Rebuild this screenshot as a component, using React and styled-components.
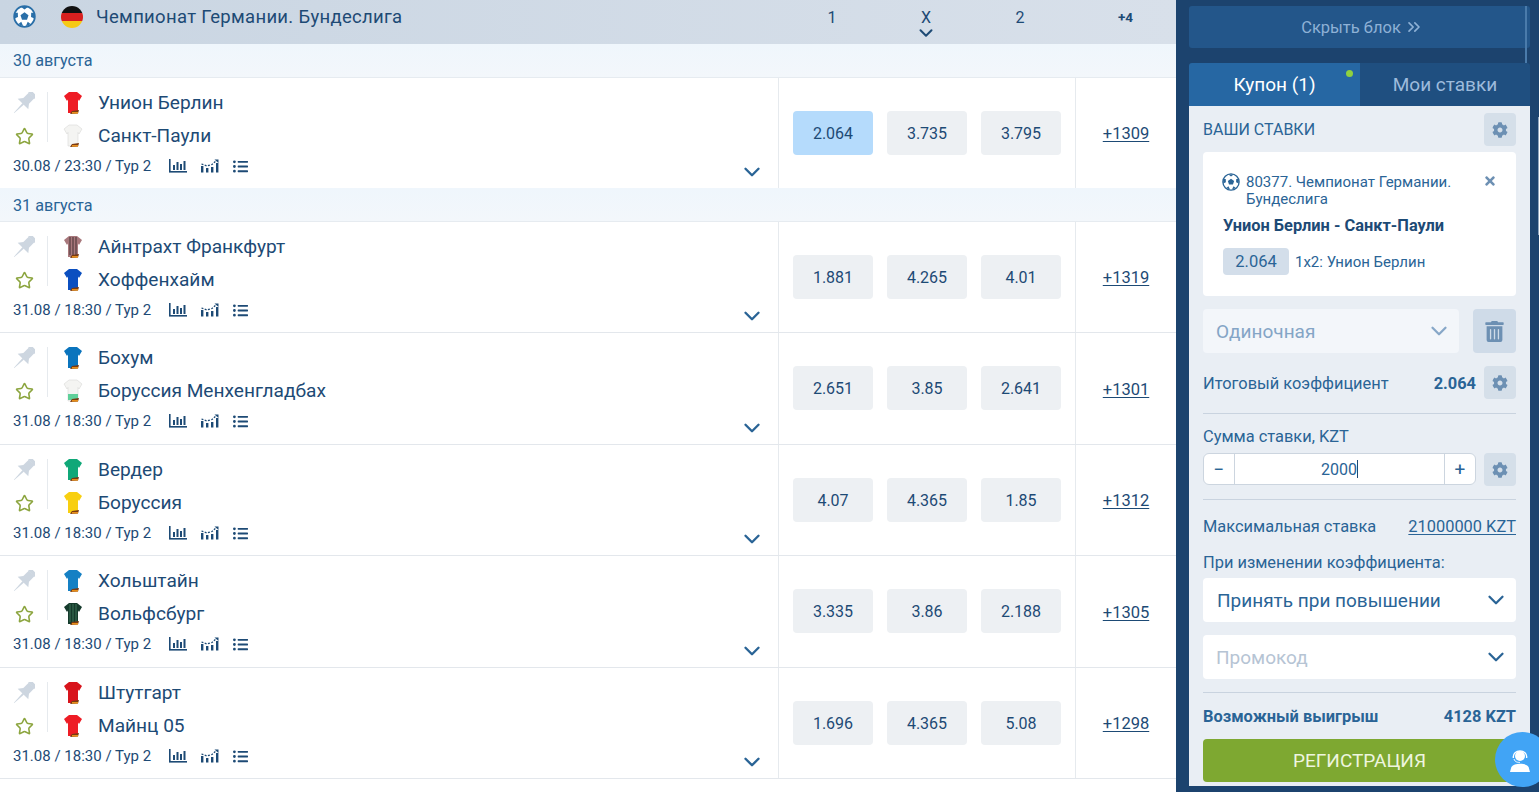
import React from 'react';
import styled, { createGlobalStyle } from 'styled-components';
import { FaCog, FaTrashAlt, FaListUl, FaTimes } from 'react-icons/fa';
import { FiChevronDown, FiChevronsRight } from 'react-icons/fi';
import { LuStar } from 'react-icons/lu';

const Global = createGlobalStyle`
  * { box-sizing: border-box; }
  html, body { margin: 0; padding: 0; height: 100%; overflow: hidden; background: #fff; }
  body { font-family: Roboto, "Liberation Sans", sans-serif; }
`;

const Page = styled.div`
  display: flex;
  width: 1539px;
  height: 792px;
  overflow: hidden;
`;

const Main = styled.div`
  width: 1176px;
  flex: none;
  background: #fff;
`;

const LeagueHeader = styled.div`
  display: flex;
  align-items: center;
  height: 44px;
  padding-bottom: 11px;
  background: linear-gradient(90deg, #c9d5e2, #d8e0ea);
  color: #1d4a75;
`;

const HeadLeft = styled.div`
  width: 778px;
  display: flex;
  align-items: center;
  padding-left: 13px;
  font-size: 18.5px;
  letter-spacing: 0.31px;
`;

const Flag = styled.span`
  width: 22px;
  height: 22px;
  margin: 0 13px 0 25px;
  border-radius: 50%;
  background: linear-gradient(#111 0 33%, #d8201f 33% 66%, #f6c915 66%);
`;

const HeadOdds = styled.div`
  width: 297px;
  display: flex;
  padding: 1px 0 0 14px;
  gap: 14px;
`;

const HeadOdd = styled.span`
  position: relative;
  width: 80px;
  text-align: center;
  font-size: 16px;
  svg { position: absolute; left: 29px; top: 14px; }
`;

const HeadMore = styled.span`
  width: 101px;
  text-align: center;
  font-size: 13.5px;
  font-weight: 700;
`;

const DateRow = styled.div`
  height: 34px;
  padding: ${p => p.$pt}px 0 0 13px;
  display: flex;
  align-items: center;
  background: linear-gradient(#eff6fc, #f3f7fb);
  border-bottom: 1px solid #e6ebf0;
  color: #2a6496;
  font-size: 16.2px;
`;

const Event = styled.div`
  display: flex;
  height: ${p => p.$h}px;
  border-bottom: ${p => (p.$line ? '1px solid #e3e7ec' : 'none')};
`;

const Info = styled.div`
  width: 779px;
  flex: none;
  display: flex;
  justify-content: space-between;
  padding: 8px 13px 0 13px;
  border-right: 1px solid #e6eaee;
`;

const InfoMain = styled.div`
  display: flex;
  flex-direction: column;
`;

const Teams = styled.div`
  display: flex;
`;

const Actions = styled.div`
  width: 35px;
  height: 50px;
  margin-top: 6px;
  padding-right: 12px;
  display: flex;
  flex-direction: column;
  justify-content: space-between;
  align-items: center;
  border-right: 1px solid #e6eaee;
`;

const StarIcon = styled(LuStar)`
  width: 19px;
  height: 19px;
  margin-bottom: -4px;
  color: #8ca53f;
`;

const TeamList = styled.div`
  margin-left: 15px;
  display: flex;
  flex-direction: column;
`;

const Team = styled.div`
  display: flex;
  align-items: center;
  height: 33px;
  color: #1d4a75;
  font-size: 19.1px;
  svg { margin-right: 15px; flex: none; }
`;

const Meta = styled.div`
  display: flex;
  align-items: center;
  margin-top: 5px;
  color: #1d4a75;
  font-size: 15px;
`;

const MetaIcons = styled.span`
  display: flex;
  align-items: center;
  gap: 14px;
  margin-left: 18px;
  color: #1d4a75;
`;

const RowChevron = styled(FiChevronDown)`
  align-self: flex-end;
  width: 26px;
  height: 26px;
  margin-bottom: 3px;
  color: #2a6496;
  stroke-width: 2.2;
`;

const Odds = styled.div`
  width: 297px;
  flex: none;
  display: flex;
  align-items: center;
  gap: 14px;
  padding-left: 14px;
  padding-bottom: 1px;
  border-right: 1px solid #e6eaee;
`;

const Odd = styled.div`
  width: 80px;
  height: 44px;
  padding-top: 1px;
  display: flex;
  align-items: center;
  justify-content: center;
  border-radius: 4px;
  background: ${p => (p.$active ? '#b5dbfc' : '#edf0f3')};
  color: #1d4a75;
  font-size: 16px;
`;

const More = styled.div`
  flex: 1;
  display: flex;
  align-items: center;
  justify-content: center;
  padding-top: 1px;
  color: #1d4a75;
  font-size: 16.5px;
  text-decoration: underline;
  text-underline-offset: 2px;
`;

const Side = styled.div`
  position: relative;
  width: 363px;
  flex: none;
  padding: 6px 9px 0 13px;
  background: #1c436e;
`;

const ScrollLine = styled.div`
  position: absolute;
  left: 349px;
  top: 6px;
  width: 2px;
  height: 100px;
  background: #4a7bab;
`;

const ScrollThumb = styled.div`
  position: absolute;
  right: 0;
  top: 117px;
  width: 1px;
  height: 118px;
  background: #8fa5bd;
`;

const HideBar = styled.div`
  height: 42px;
  padding-left: 6px;
  display: flex;
  align-items: center;
  justify-content: center;
  gap: 3px;
  border-radius: 3px;
  background: #23568a;
  color: #8eb1d6;
  font-size: 16.5px;
`;

const Tabs = styled.div`
  display: flex;
  margin-top: 15px;
  height: 43px;
`;

const Tab = styled.div`
  position: relative;
  width: ${p => p.$w}px;
  display: flex;
  align-items: center;
  justify-content: center;
  font-size: 19px;
  background: ${p => (p.$active ? '#2667a3' : '#1f4f80')};
  color: ${p => (p.$active ? '#fff' : '#9dbbdc')};
  border-radius: ${p => (p.$active ? '3px 0 0 0' : '0 3px 0 0')};
`;

const Dot = styled.span`
  position: absolute;
  top: 7px;
  right: 7px;
  width: 7px;
  height: 7px;
  border-radius: 50%;
  background: #8fd13f;
`;

const Panel = styled.div`
  height: 680px;
  padding: 7px 14px 0;
  background: #e9eef4;
  color: #2a6496;
`;

const Row = styled.div`
  display: flex;
  align-items: center;
  justify-content: space-between;
  height: ${p => p.$h}px;
  margin-top: ${p => p.$mt || 0}px;
  font-size: ${p => p.$fs || 16.4}px;
  font-weight: ${p => (p.$bold ? 700 : 400)};
`;

const RowLabel = styled.span`
  flex: 1;
  padding-top: 1px;
`;

const RowValue = styled.strong`
  padding-top: 1px;
`;

const GearBtn = styled.span`
  width: 32px;
  height: 33px;
  flex: none;
  margin-left: 8px;
  display: flex;
  align-items: center;
  justify-content: center;
  border-radius: 4px;
  background: #d5dfe9;
  color: #6d90b3;
  font-size: 16px;
`;

const Card = styled.div`
  height: 144px;
  margin-top: 6px;
  padding: 22px 19px 0 20px;
  border-radius: 4px;
  background: #fff;
`;

const CardHead = styled.div`
  display: flex;
  font-size: 15px;
  line-height: 17px;
  color: #2a6496;
  > svg:first-child { flex: none; margin: -1px 6px 0 -1px; }
`;

const Close = styled(FaTimes)`
  width: 14px;
  height: 14px;
  flex: none;
  margin: 0 0 0 20px;
  color: #6d90b3;
`;

const CardTitle = styled.div`
  margin-top: 8px;
  color: #1d4a75;
  font-size: 16.4px;
  font-weight: 700;
  line-height: 19px;
`;

const Pick = styled.div`
  display: flex;
  align-items: center;
  margin-top: 13px;
  color: #2a6496;
  font-size: 15px;
`;

const PickOdd = styled.span`
  width: 66px;
  height: 27px;
  margin-right: 6px;
  display: flex;
  align-items: center;
  justify-content: center;
  border-radius: 4px;
  background: #d3deea;
  font-size: 16.5px;
`;

const SelectRow = styled.div`
  display: flex;
  gap: 14px;
  margin-top: 13px;
`;

const Select = styled.div`
  flex: 1;
  height: 44px;
  margin-top: ${p => p.$mt || 0}px;
  padding: 0 7px 0 ${p => p.$pl || 13}px;
  display: flex;
  align-items: center;
  justify-content: space-between;
  border-radius: 4px;
  background: ${p => (p.$faded ? '#f3f6fa' : '#fff')};
  color: ${p => p.$color};
  font-size: 19px;
  svg { width: 26px; height: 26px; stroke-width: 2.1; color: ${p => (p.$faded ? '#87a7c8' : '#2a6496')}; }
`;

const TrashBtn = styled.span`
  width: 43px;
  height: 44px;
  display: flex;
  align-items: center;
  justify-content: center;
  border-radius: 4px;
  background: #cfdbe8;
  color: #6d90b3;
  font-size: 21px;
`;

const Divider = styled.div`
  height: 1px;
  margin-top: ${p => p.$mt}px;
  background: #c9d3df;
`;

const Label = styled.div`
  height: 20px;
  margin-top: ${p => p.$mt}px;
  display: flex;
  align-items: center;
  font-size: 16.4px;
`;

const StakeRow = styled.div`
  display: flex;
  margin-top: 7px;
`;

const Stake = styled.div`
  flex: 1;
  height: 32px;
  display: flex;
  border: 1px solid #ccd5df;
  border-radius: 6px;
  background: #fff;
  font-size: 16px;
`;

const StakeBtn = styled.span`
  width: ${p => p.$w}px;
  flex: none;
  display: flex;
  align-items: center;
  justify-content: center;
  font-size: 19px;
  border-${p => p.$side}: 1px solid #ccd5df;
`;

const StakeValue = styled.span`
  flex: 1;
  display: flex;
  align-items: center;
  justify-content: center;
`;

const Caret = styled.i`
  width: 1px;
  height: 18px;
  background: #1d4a75;
`;

const MaxLink = styled.span`
  text-decoration: underline;
  text-underline-offset: 2px;
`;

const Register = styled.div`
  height: 43px;
  margin-top: 13px;
  display: flex;
  align-items: center;
  justify-content: center;
  border-radius: 4px;
  background: #7ea831;
  color: #eef5df;
  font-size: 19px;
`;

const Bubble = styled.div`
  position: absolute;
  left: 319px;
  top: 732px;
  width: 55px;
  height: 55px;
  padding-left: 14px;
  display: flex;
  align-items: center;
  border-radius: 50%;
  background: #41a4f5;
`;

const shirtPath = 'M6 1 L14 1 L19 5 L16 10 L15 8.5 L15 22 L5 22 L5 8.5 L4 10 L1 5 Z';

// little team shirt: colour of the body, optional centre stripes and a lower band
function Shirt({ color, stripe, low }) {
  const white = color === WHITE;
  return (
    <svg width="20" height="24" viewBox="0 0 20 24">
      <path d={shirtPath} fill={color} stroke={white ? '#d8d8d6' : 'none'} strokeWidth="0.6" />
      {stripe && (
        <g fill={stripe} opacity="0.45">
          <rect x="6" y="2" width="2" height="18" />
          <rect x="9" y="2" width="2" height="18" />
          <rect x="12" y="2" width="2" height="18" />
        </g>
      )}
      {low && <path d="M5 15 L15 15 L15 21 L5 21 Z" fill={low} />}
      <path d="M9 20 L16 19 L15 22.5 L7 23 Z" fill="#7a3a12" />
      <rect x="9" y="21" width="6" height="1.6" fill="#e8901c" />
    </svg>
  );
}

function PinIcon() {
  return (
    <svg width="22" height="22" viewBox="0 0 22 22" fill="#cdd6e0">
      <g transform="rotate(45 11 11)">
        <rect x="5.5" y="-3" width="11" height="3.4" rx="1" />
        <rect x="7" y="0" width="8" height="9" />
        <path d="M7 8 L15 8 L18.5 12.4 L3.5 12.4 Z" />
        <path d="M10 12 L12 12 L11.3 25 L10.7 25 Z" />
      </g>
    </svg>
  );
}

function SoccerBall({ size, color }) {
  return (
    <svg width={size} height={size} viewBox="0 0 24 24">
      <circle cx="12" cy="12" r="10.8" fill="#fff" stroke={color} strokeWidth="1.8" />
      <g fill={color}>
        <path d="M12 7.6 L16.2 10.6 L14.6 15.4 L9.4 15.4 L7.8 10.6 Z" />
        <path d="M8.5 2 L15.5 2 L12 4.8 Z" />
        <path d="M22 8 L22.4 14 L18.8 12.4 L19 8 Z" />
        <path d="M2 8 L1.6 14 L5.2 12.4 L5 8 Z" />
        <path d="M6 19.5 L8.6 17.6 L10.6 21.8 L7.6 21 Z" />
        <path d="M18 19.5 L15.4 17.6 L13.4 21.8 L16.4 21 Z" />
      </g>
    </svg>
  );
}

function BarsIcon() {
  return (
    <svg width="18" height="14" viewBox="0 0 18 14" fill="#1d4a75">
      <rect x="0" y="0" width="1.6" height="13" />
      <rect x="0" y="12" width="18" height="1.6" />
      <rect x="4" y="6" width="2" height="5" />
      <rect x="7.5" y="3" width="2" height="8" />
      <rect x="11" y="5" width="2" height="6" />
      <rect x="14.5" y="2" width="2" height="9" />
    </svg>
  );
}

function TrendIcon() {
  return (
    <svg width="18" height="14" viewBox="0 0 18 14" fill="#1d4a75">
      <rect x="0" y="7" width="2.4" height="6.5" />
      <rect x="5" y="9" width="2.4" height="4.5" />
      <rect x="10" y="8" width="2.4" height="5.5" />
      <rect x="15" y="4" width="2.4" height="9.5" />
      <path d="M0.5 5 L6 7 L11 5.5 L15.5 1.5" fill="none" stroke="#1d4a75" strokeWidth="1.3" strokeDasharray="2 1.4" />
      <path d="M13.5 0.5 L17.5 0.5 L17.5 4 Z" />
    </svg>
  );
}

function AgentIcon() {
  return (
    <svg width="22" height="24" viewBox="0 0 22 24" fill="#fff">
      <circle cx="11" cy="8" r="5" />
      <path d="M4.4 10 C3 0.5 19 0.5 17.6 10" fill="none" stroke="#fff" strokeWidth="1.4" />
      <path d="M5 11 C6 14.4 9 14.4 11 14.4" fill="none" stroke="#fff" strokeWidth="1" />
      <path d="M1 24 L2.4 19 C4 16.5 7 15.8 11 15.8 C15 15.8 18 16.5 19.6 19 L21 24 Z" />
    </svg>
  );
}

const WHITE = '#f4f4f2';

const sections = [
  {
    date: '30 августа',
    pt: 0,
    rows: [
      { h: 110, a: 'Унион Берлин', b: 'Санкт-Паули', sa: { color: '#ee1c25' }, sb: { color: WHITE }, time: '30.08 / 23:30 / Тур 2', odds: ['2.064', '3.735', '3.795'], more: '+1309', active: true },
    ],
  },
  {
    date: '31 августа',
    pt: 1,
    rows: [
      { h: 111, a: 'Айнтрахт Франкфурт', b: 'Хоффенхайм', sa: { color: '#a8787c', stripe: '#3a2a2c' }, sb: { color: '#0b4fc0' }, odds: ['1.881', '4.265', '4.01'], more: '+1319', line: true },
      { h: 112, a: 'Бохум', b: 'Боруссия Менхенгладбах', sa: { color: '#0a74bd' }, sb: { color: WHITE, low: '#5fd09a' }, odds: ['2.651', '3.85', '2.641'], more: '+1301', line: true },
      { h: 111, a: 'Вердер', b: 'Боруссия', sa: { color: '#10a878' }, sb: { color: '#f8cf10' }, odds: ['4.07', '4.365', '1.85'], more: '+1312', line: true },
      { h: 112, a: 'Хольштайн', b: 'Вольфсбург', sa: { color: '#1580c4' }, sb: { color: '#153a2c', stripe: '#3f7a5c' }, odds: ['3.335', '3.86', '2.188'], more: '+1305', line: true },
      { h: 111, a: 'Штутгарт', b: 'Майнц 05', sa: { color: '#d8141c' }, sb: { color: '#ee1c25' }, odds: ['1.696', '4.365', '5.08'], more: '+1298', line: true },
    ],
  },
];

function App() {
  return (
    <Page>
      <Global />
      <Main>
        <LeagueHeader>
          <HeadLeft>
            <SoccerBall size={23} color="#2a6fa8" />
            <Flag />
            Чемпионат Германии. Бундеслига
          </HeadLeft>
          <HeadOdds>
            <HeadOdd>1</HeadOdd>
            <HeadOdd>
              X
              <FiChevronDown size={22} strokeWidth={2.2} />
            </HeadOdd>
            <HeadOdd>2</HeadOdd>
          </HeadOdds>
          <HeadMore>+4</HeadMore>
        </LeagueHeader>
        {sections.map(s => (
          <React.Fragment key={s.date}>
            <DateRow $pt={s.pt}>{s.date}</DateRow>
            {s.rows.map(r => (
              <Event key={r.a} $h={r.h} $line={r.line}>
                <Info>
                  <InfoMain>
                    <Teams>
                      <Actions>
                        <PinIcon />
                        <StarIcon />
                      </Actions>
                      <TeamList>
                        <Team><Shirt {...r.sa} />{r.a}</Team>
                        <Team><Shirt {...r.sb} />{r.b}</Team>
                      </TeamList>
                    </Teams>
                    <Meta>
                      {r.time || '31.08 / 18:30 / Тур 2'}
                      <MetaIcons>
                        <BarsIcon />
                        <TrendIcon />
                        <FaListUl size={15} />
                      </MetaIcons>
                    </Meta>
                  </InfoMain>
                  <RowChevron />
                </Info>
                <Odds>
                  {r.odds.map((o, i) => (
                    <Odd key={i} $active={r.active && i === 0}>{o}</Odd>
                  ))}
                </Odds>
                <More>{r.more}</More>
              </Event>
            ))}
          </React.Fragment>
        ))}
      </Main>
      <Side>
        <ScrollLine />
        <ScrollThumb />
        <HideBar>Скрыть блок <FiChevronsRight size={20} /></HideBar>
        <Tabs>
          <Tab $active $w={171}>Купон (1)<Dot /></Tab>
          <Tab $w={170}>Мои ставки</Tab>
        </Tabs>
        <Panel>
          <Row $h={33} $fs={16}>
            ВАШИ СТАВКИ
            <GearBtn><FaCog /></GearBtn>
          </Row>
          <Card>
            <CardHead>
              <SoccerBall size={18} color="#2a6496" />
              <span>80377. Чемпионат Германии. Бундеслига</span>
              <Close />
            </CardHead>
            <CardTitle>Унион Берлин - Санкт-Паули</CardTitle>
            <Pick>
              <PickOdd>2.064</PickOdd>
              1х2: Унион Берлин
            </Pick>
          </Card>
          <SelectRow>
            <Select $faded $color="#84a5c6">Одиночная<FiChevronDown /></Select>
            <TrashBtn><FaTrashAlt /></TrashBtn>
          </SelectRow>
          <Row $h={33} $mt={13}>
            <RowLabel>Итоговый коэффициент</RowLabel>
            <RowValue>2.064</RowValue>
            <GearBtn><FaCog /></GearBtn>
          </Row>
          <Divider $mt={14} />
          <Label $mt={12}>Сумма ставки, KZT</Label>
          <StakeRow>
            <Stake>
              <StakeBtn $w={31} $side="right">−</StakeBtn>
              <StakeValue>2000<Caret /></StakeValue>
              <StakeBtn $w={31} $side="left">+</StakeBtn>
            </Stake>
            <GearBtn><FaCog /></GearBtn>
          </StakeRow>
          <Divider $mt={13} />
          <Row $h={20} $mt={16}>
            Максимальная ставка
            <MaxLink>21000000 KZT</MaxLink>
          </Row>
          <Label $mt={16}>При изменении коэффициента:</Label>
          <Select $mt={6} $pl={14} $color="#2a6496">Принять при повышении<FiChevronDown /></Select>
          <Select $mt={13} $color="#b6c4d4">Промокод<FiChevronDown /></Select>
          <Divider $mt={13} />
          <Row $h={20} $mt={13} $bold>
            Возможный выигрыш
            <span>4128 KZT</span>
          </Row>
          <Register>РЕГИСТРАЦИЯ</Register>
        </Panel>
        <Bubble><AgentIcon /></Bubble>
      </Side>
    </Page>
  );
}

export default App;
